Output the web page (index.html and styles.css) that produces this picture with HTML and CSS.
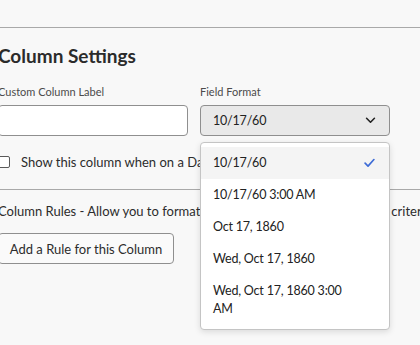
FILE: index.html
```html
<!DOCTYPE html>
<html lang="en">
<head>
  <meta charset="UTF-8" />
  <meta name="viewport" content="width=device-width, initial-scale=1.0" />
  <title>Column Settings</title>
  <link rel="stylesheet" href="styles.css">
</head>
<body>

<!-- ===== Column settings panel ===== -->
<div class="panel">
  <hr class="rule top-rule">

  <h2>Column Settings</h2>

  <div class="fields">
    <div class="field">
      <label>Custom Column Label</label>
      <input class="text-input" type="text">
    </div>
    <div class="field">
      <label>Field Format</label>
      <div class="select-wrap">
        <button class="select">
          <span>10/17/60</span>
          <svg class="chevron" viewBox="0 0 12 8" width="11" height="7"><path d="M1.5 1.5 6 6l4.5-4.5" fill="none" stroke="#222" stroke-width="1.8" stroke-linecap="round" stroke-linejoin="round"/></svg>
        </button>

        <!-- open menu -->
        <ul class="menu">
          <li class="selected"><span>10/17/60</span>
            <svg class="check" viewBox="0 0 12 10" width="11" height="10"><path d="M1.2 5.2 4.4 8.4 10.8 1.2" fill="none" stroke="#3d6bd6" stroke-width="1.8" stroke-linecap="round" stroke-linejoin="round"/></svg>
          </li>
          <li><span>10/17/60 3:00 AM</span></li>
          <li><span>Oct 17, 1860</span></li>
          <li><span>Wed, Oct 17, 1860</span></li>
          <li><span>Wed, Oct 17, 1860 3:00 AM</span></li>
        </ul>
      </div>
    </div>
  </div>

  <label class="check-row">
    <span class="box"></span>
    Show this column when on a Dashboard
  </label>

  <hr class="rule">

  <p class="rules-text">Column Rules - Allow you to format the cells in this column based on criteria</p>
  <button class="rule-btn">Add a Rule for this Column</button>
</div>

</body>
</html>
```

FILE: styles.css
```css
* { box-sizing:border-box; margin:0; padding:0; }
html,body{ height:100%; }
body {
  background:#f8f8f8; color:#2c2c2c; overflow:hidden;
  font-family:Lato,"Open Sans",sans-serif;
}

.panel{ padding-top:27px; margin-left:-2px; min-height:345px; }

.rule{ border:none; border-top:1px solid #a9a9a9; }
.top-rule{ margin-bottom:15px; }

h2{ font-size:19px; font-weight:700; color:#2b2b2b; line-height:26px; margin-bottom:15px; }

.fields{ display:grid; grid-template-columns:190px 190px; gap:12px; }
.field label{ display:block; font-size:11px; color:#4b4b4b; line-height:16px; margin-bottom:5px; }
.text-input{
  width:100%; height:31px; border:1px solid #8f8f8f; border-radius:4px; background:#fff;
}

.select-wrap{ position:relative; }
.select{
  width:100%; height:31px; display:flex; align-items:center; justify-content:space-between;
  padding:0 12px; border:1px solid #8f8f8f; border-radius:4px; background:#e9e9e9;
  font:inherit; font-size:12.5px; letter-spacing:-.2px; color:#222;
}
.chevron{ display:block; margin-right:1px; }

.menu{
  position:absolute; left:0; top:37px; width:190px; z-index:5;
  list-style:none; background:#fff; border:1px solid #c4c4c4; border-radius:4px;
  padding:4px 0; box-shadow:0 2px 6px rgba(0,0,0,.12);
}
.menu li{
  display:flex; align-items:center; justify-content:space-between;
  min-height:32px; padding:7px 12px; font-size:12.5px; letter-spacing:-.2px; line-height:18px; color:#222;
}
.menu li span{ max-width:140px; }
.menu li.selected{ background:#f4f4f4; }
.check{ display:block; margin-right:2px; }

.check-row{
  display:flex; align-items:center; gap:11px; margin-top:18px; height:16px;
  font-size:13px; color:#2c2c2c; white-space:nowrap;
}
.box{ width:12px; height:12px; border:1.5px solid #5a5a5a; border-radius:2px; background:#fff; flex:none; }

.check-row + .rule{ margin-top:19px; }

.rules-text{ font-size:13px; line-height:18px; margin-top:12px; white-space:nowrap; color:#2c2c2c; }
.rule-btn{
  margin-top:13px; height:31px; width:176px; white-space:nowrap;
  background:#fafafa; border:1px solid #8f8f8f; border-radius:4px;
  font:inherit; font-size:13px; color:#2c2c2c;
}
```
